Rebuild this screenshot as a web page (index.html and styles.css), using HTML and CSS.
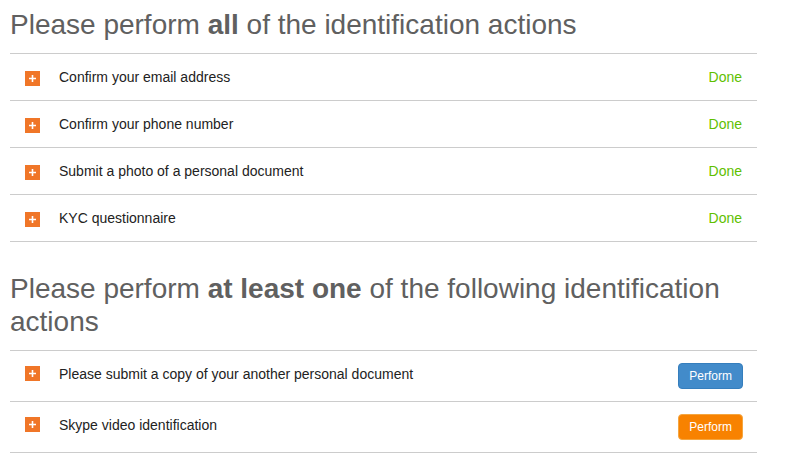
FILE: index.html
```html
<!DOCTYPE html>
<html lang="en">
<head>
    <meta charset="UTF-8">
    <title>Identification</title>
    <link rel="stylesheet" href="styles.css">
</head>
<body>
    <div class="page">
        <div class="section">
            <h2>Please perform <b>all</b> of the identification actions</h2>
            <div class="list">
                <div class="row">
                    <span class="plus"><svg width="15" height="15" viewBox="0 0 15 15"><path d="M7.5 4v7M4 7.5h7" stroke="#fff" stroke-width="1.6"/></svg></span>
                    <span class="label">Confirm your email address</span>
                    <span class="done">Done</span>
                </div>
                <div class="row">
                    <span class="plus"><svg width="15" height="15" viewBox="0 0 15 15"><path d="M7.5 4v7M4 7.5h7" stroke="#fff" stroke-width="1.6"/></svg></span>
                    <span class="label">Confirm your phone number</span>
                    <span class="done">Done</span>
                </div>
                <div class="row">
                    <span class="plus"><svg width="15" height="15" viewBox="0 0 15 15"><path d="M7.5 4v7M4 7.5h7" stroke="#fff" stroke-width="1.6"/></svg></span>
                    <span class="label">Submit a photo of a personal document</span>
                    <span class="done">Done</span>
                </div>
                <div class="row">
                    <span class="plus"><svg width="15" height="15" viewBox="0 0 15 15"><path d="M7.5 4v7M4 7.5h7" stroke="#fff" stroke-width="1.6"/></svg></span>
                    <span class="label">KYC questionnaire</span>
                    <span class="done">Done</span>
                </div>
            </div>
        </div>

        <div class="section second">
            <h2>Please perform <b>at least one</b> of the following identification actions</h2>
            <div class="list">
                <div class="row action">
                    <span class="plus"><svg width="15" height="15" viewBox="0 0 15 15"><path d="M7.5 4v7M4 7.5h7" stroke="#fff" stroke-width="1.6"/></svg></span>
                    <span class="label">Please submit a copy of your another personal document</span>
                    <button class="btn blue">Perform</button>
                </div>
                <div class="row action">
                    <span class="plus"><svg width="15" height="15" viewBox="0 0 15 15"><path d="M7.5 4v7M4 7.5h7" stroke="#fff" stroke-width="1.6"/></svg></span>
                    <span class="label">Skype video identification</span>
                    <button class="btn orange">Perform</button>
                </div>
            </div>
        </div>
    </div>
</body>
</html>
```

FILE: styles.css
```css
body {
    margin: 0;
    font-family: 'Liberation Sans', Arial, sans-serif;
    background-color: #fff;
}
.page {
    width: 747px;
    padding: 8px 0 0 10px;
}
h2 {
    margin: 0 0 11px;
    font-size: 28px;
    line-height: 1.2;
    font-weight: normal;
    color: #606060;
}
h2 b {
    font-weight: bold;
}
.second {
    margin-top: 30px;
}
.list {
    border-top: 1px solid #ccc;
}
.row {
    display: flex;
    align-items: flex-start;
    padding: 13px 15px 13px 15px;
    border-bottom: 1px solid #ccc;
    font-size: 14px;
    line-height: 20px;
    color: #222;
}
.row.action {
    padding: 12px 14px 12px 15px;
    line-height: 22px;
}
.plus {
    display: block;
    width: 15px;
    height: 15px;
    margin-top: 4px;
    margin-right: 19px;
    background-color: #f07628;
}
.row.action .plus {
    margin-top: 3px;
}
.plus svg {
    display: block;
}
.label {
    flex: 1;
}
.done {
    color: #5fc000;
}
.btn {
    font-family: inherit;
    font-size: 12px;
    line-height: 18px;
    padding: 3px 10px;
    border-radius: 4px;
    color: #fff;
    cursor: pointer;
    margin-top: 0;
}
.blue {
    background-color: #428bca;
    border: 1px solid #357ebd;
}
.orange {
    background-color: #f88200;
    border: 1px solid #f5a640;
}
```
